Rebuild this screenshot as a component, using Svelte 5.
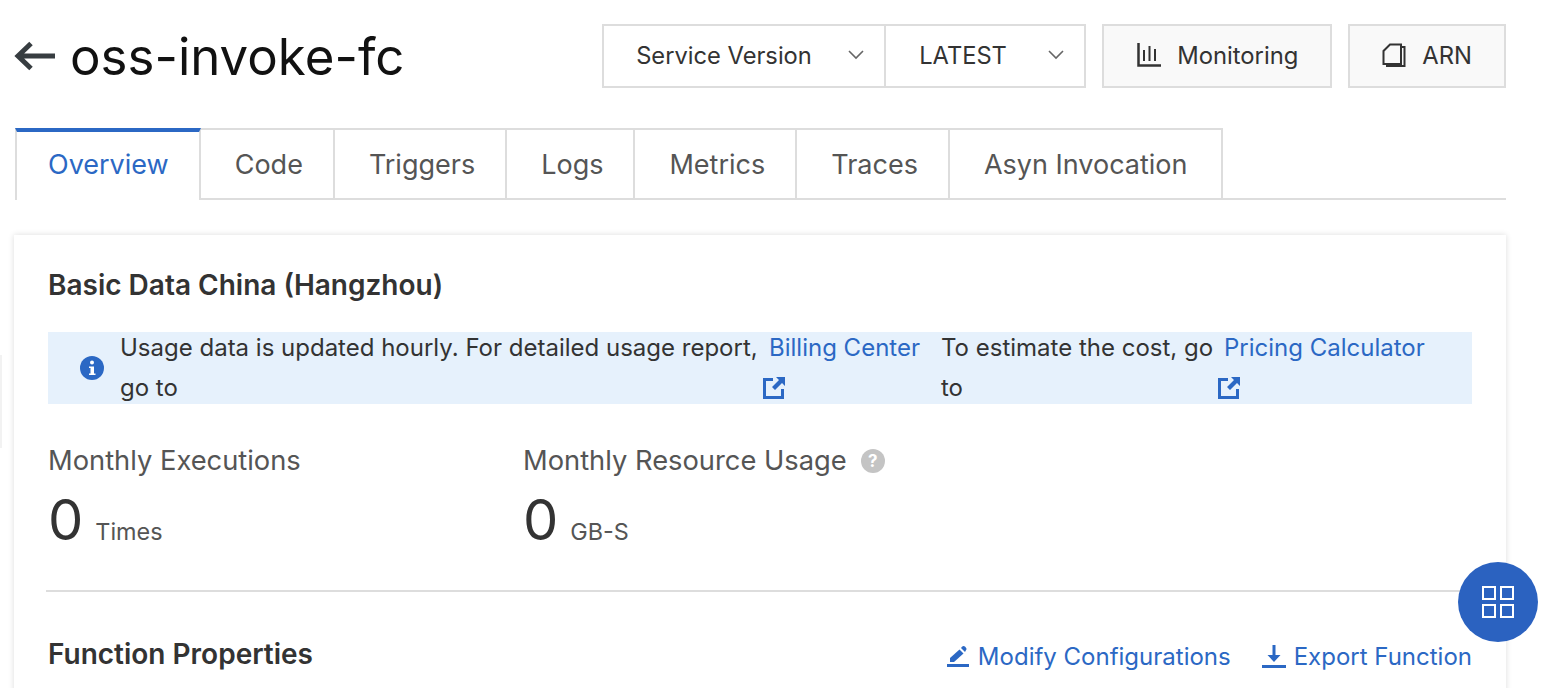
<script>
  const tabs = ['Overview', 'Code', 'Triggers', 'Logs', 'Metrics', 'Traces', 'Asyn Invocation'];
  let active = 'Overview';
</script>

<div class="edge"></div>

<div class="page">
  <header class="head">
    <h1 class="title">
      <svg class="back" viewBox="0 0 42 32" width="42" height="32" aria-hidden="true">
        <path d="M41 16H5M17 3.500 4 16l13 12.500" fill="none" stroke="#373d41" stroke-width="5" />
      </svg>
      oss-invoke-fc
    </h1>
    <div class="actions">
      <div class="selects">
        <div class="select first">
          Service Version
          <svg class="chev" viewBox="0 0 16 10" width="16" height="10"><path d="M1 1l7 7 7-7" fill="none" stroke="#666" stroke-width="1.600" /></svg>
        </div>
        <div class="select second">
          LATEST
          <svg class="chev" viewBox="0 0 16 10" width="16" height="10"><path d="M1 1l7 7 7-7" fill="none" stroke="#666" stroke-width="1.600" /></svg>
        </div>
      </div>
      <button class="btn monitoring">
        <svg viewBox="0 0 24 24" width="24" height="24" fill="none" stroke="#333">
          <path d="M1.500 0V22.500H24" stroke-width="2.500" />
          <path d="M7 7v11M12.500 3v15M18 6v12" stroke-width="2" />
        </svg>
        Monitoring
      </button>
      <button class="btn arn">
        <svg viewBox="0 0 24 24" width="24" height="24" fill="none" stroke="#333" stroke-width="2">
          <path d="M8 1.500H19V21H1.500V8Z" />
          <path d="M19 4H22.500V23H5V21" />
        </svg>
        ARN
      </button>
    </div>
  </header>

  <nav class="tabs">
    {#each tabs as tab}
      <div class="tab" class:active={tab === active}>{tab}</div>
    {/each}
  </nav>

  <section class="card">
    <h2 class="heading">Basic Data China (Hangzhou)</h2>

    <div class="notice">
      <svg class="info" viewBox="0 0 24 24" width="24" height="24">
        <circle cx="12" cy="12" r="12" fill="#2b68c4" />
        <circle cx="12" cy="6.600" r="2" fill="#fff" />
        <path d="M9 10.500h5v7h1.500V19h-6.500v-1.500H10.500v-5.500H9z" fill="#fff" />
      </svg>
      <span class="msg one">Usage data is updated hourly. For detailed usage report, go to</span>
      <a class="link one">
        Billing Center
        {@render external()}
      </a>
      <span class="msg two">To estimate the cost, go to</span>
      <a class="link two">
        Pricing Calculator
        {@render external()}
      </a>
    </div>

    <div class="stats">
      <div class="stat executions">
        <div class="label">Monthly Executions</div>
        <div class="value"><span class="num">0</span><span class="unit">Times</span></div>
      </div>
      <div class="stat">
        <div class="label">
          Monthly Resource Usage
          <span class="help">?</span>
        </div>
        <div class="value"><span class="num">0</span><span class="unit">GB-S</span></div>
      </div>
    </div>

    <hr class="divider" />

    <div class="props">
      <h2 class="heading">Function Properties</h2>
      <div class="ops">
        <a class="op">
          <svg viewBox="0 0 24 24" width="24" height="24" fill="#2b68c4">
            <path d="M3 17v-4L12.500 4.500 16.500 8.500 7 17z" />
            <path d="M14 3l1-1.200a2.200 2.200 0 0 1 3.200 0l.6.600a2.200 2.200 0 0 1 0 3.200L18 7z" />
            <rect x="0" y="19" width="22" height="3" />
          </svg>
          Modify Configurations
        </a>
        <a class="op">
          <svg viewBox="0 0 24 24" width="24" height="24" fill="#2b68c4">
            <path d="M10.500 0h3v10h5L12 17 5.500 10h5z" />
            <rect x="0" y="20" width="24" height="3" />
          </svg>
          Export Function
        </a>
      </div>
    </div>
  </section>
</div>

<button class="fab" aria-label="Apps">
  <svg viewBox="0 0 32 32" width="32" height="32" fill="none" stroke="#fff" stroke-width="2">
    <rect x="1" y="1" width="12" height="12" />
    <rect x="19" y="1" width="12" height="12" />
    <rect x="1" y="19" width="12" height="12" />
    <rect x="19" y="19" width="12" height="12" />
  </svg>
</button>

{#snippet external()}
  <svg class="ext" viewBox="0 0 22 22" width="22" height="22" fill="#2b68c4">
    <path d="M0 1h10v3H3v15h15v-7h3v10H0z" />
    <path d="M13 0h9v9l-3-3-7 7-3-3 7-7z" />
  </svg>
{/snippet}

<style>
  :global(body) {
    margin: 0;
    background: #fff;
    overflow: hidden;
  }

  .page {
    box-sizing: border-box;
    width: 1544px;
    height: 688px;
    overflow: hidden;
    padding: 24px 38px 0 14px;
    font-family: Inter, "Noto Sans", sans-serif;
    color: #333;
  }

  .edge {
    position: absolute;
    left: 0;
    top: 355px;
    width: 2px;
    height: 93px;
    background: #f2f2f2;
  }

  .head {
    display: flex;
    justify-content: space-between;
    height: 64px;
  }

  .title {
    display: flex;
    align-items: center;
    margin: 0;
    font-size: 51px;
    font-weight: 400;
    color: #111;
    white-space: nowrap;
  }

  .back {
    margin-right: 14px;
  }

  .actions {
    display: flex;
    gap: 16px;
  }

  .selects {
    display: flex;
    box-sizing: border-box;
    height: 64px;
    border: 2px solid #ddd;
  }

  .select {
    display: flex;
    align-items: center;
    justify-content: space-between;
    box-sizing: border-box;
    padding: 0 20px 2px 32px;
    font-size: 23.700px;
    color: #333;
  }

  .select.first {
    width: 282px;
    border-right: 2px solid #ddd;
  }

  .select.second {
    width: 198px;
    padding-left: 33px;
  }

  .btn {
    display: flex;
    align-items: center;
    gap: 16px;
    box-sizing: border-box;
    height: 64px;
    padding: 0 32px 2px;
    border: 2px solid #ddd;
    background: #f9f9f9;
    font: inherit;
    font-size: 23.800px;
    color: #333;
  }

  .btn.monitoring {
    padding-left: 33px;
  }

  .tabs {
    display: flex;
    box-sizing: border-box;
    height: 72px;
    margin: 40px 0 0 1px;
    border-bottom: 2px solid #ddd;
  }

  .tab {
    box-sizing: border-box;
    height: 72px;
    padding: 0 30px 0 34px;
    border: 2px solid #ddd;
    border-left: 0;
    font-size: 27px;
    line-height: 70px;
    color: #555;
    white-space: nowrap;
  }

  .tab:last-child {
    padding-right: 33px;
  }

  .tab.active {
    padding: 0 30px 0 31px;
    border-left: 2px solid #ddd;
    border-top: 4px solid #2b68c4;
    border-bottom: 0;
    color: #2b68c4;
    line-height: 66px;
    background: #fff;
  }

  .card {
    box-sizing: border-box;
    height: 520px;
    margin-top: 35px;
    padding: 34px 34px 0;
    background: #fff;
    box-shadow: 0 0 6px rgba(0, 0, 0, 0.14);
  }

  .heading {
    margin: 0;
    font-size: 28px;
    font-weight: 600;
    line-height: 32px;
    color: #333;
  }

  .notice {
    display: flex;
    align-items: flex-start;
    height: 72px;
    margin-top: 31px;
    background: #e6f1fc;
    font-size: 24px;
    line-height: 40px;
    color: #333;
  }

  .info {
    flex: none;
    margin: 24px 16px 0 32px;
  }

  .msg.one {
    width: 642px;
    margin-right: 7px;
  }

  .msg.two {
    width: 276px;
    margin-right: 7px;
  }

  .msg {
    flex: none;
    margin-top: -4px;
  }

  .link {
    flex: none;
    margin-top: -4px;
    color: #2b68c4;
    white-space: nowrap;
  }

  .link.one {
    width: 151px;
    margin-right: 21px;
  }

  .link.two {
    width: 200px;
  }

  .ext {
    display: block;
    margin: 9px 0 0 -6px;
  }

  .stats {
    display: flex;
    margin-top: 41px;
  }

  .stat.executions {
    width: 475px;
  }

  .label {
    display: flex;
    align-items: center;
    gap: 14px;
    font-size: 27.300px;
    line-height: 32px;
    color: #555;
  }

  .help {
    display: inline-block;
    width: 24px;
    height: 24px;
    border-radius: 50%;
    background: #c4c4c4;
    color: #fff;
    font-size: 17px;
    font-weight: 700;
    line-height: 24px;
    text-align: center;
  }

  .value {
    display: flex;
    align-items: baseline;
    margin-top: 10px;
    color: #333;
  }

  .num {
    font-size: 56px;
    line-height: 66px;
    margin-right: 12px;
  }

  .unit {
    font-size: 23.400px;
    color: #555;
  }

  .divider {
    height: 2px;
    margin: 37px 0 0 -2px;
    border: 0;
    background: #ddd;
  }

  .props {
    display: flex;
    align-items: flex-start;
    justify-content: space-between;
    margin-top: 46px;
  }

  .ops {
    display: flex;
    gap: 31px;
    padding-top: 4px;
  }

  .op {
    display: flex;
    align-items: center;
    gap: 8px;
    font-size: 24px;
    color: #2b68c4;
    white-space: nowrap;
  }

  .op:first-child {
    gap: 7px;
  }

  .fab {
    position: fixed;
    left: 1458px;
    top: 562px;
    display: flex;
    align-items: center;
    justify-content: center;
    width: 80px;
    height: 80px;
    padding: 0;
    border: 0;
    border-radius: 50%;
    background: #2b62c0;
  }
</style>
